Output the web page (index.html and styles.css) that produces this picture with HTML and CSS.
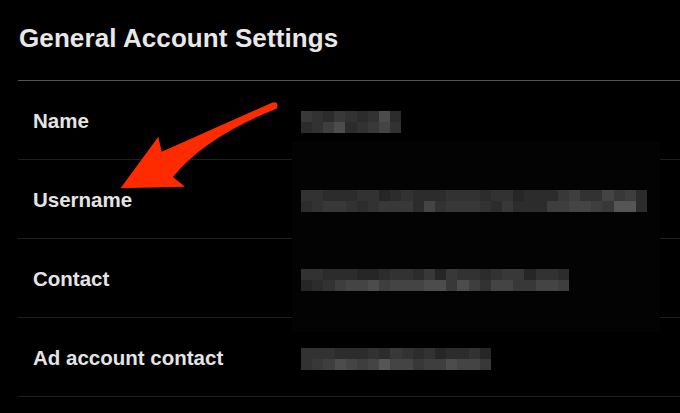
FILE: index.html
```html
<!DOCTYPE html>
<html lang="en">
<head>
<meta charset="utf-8">
<title>General Account Settings</title>
<link rel="stylesheet" href="styles.css">
</head>
<body>
<div class="page">
  <header class="header">
    <h1 class="title">General Account Settings</h1>
  </header>
  <div class="list">
    <div class="row">
      <div class="label">Name</div>
      <div class="pix w9">
        <i class="d"></i><i class="c"></i><i class="b"></i><i class="d"></i><i class="c"></i><i class="b"></i><i class="c"></i><i class="g"></i><i class="b"></i>
        <i class="b"></i><i class="c"></i><i class="e"></i><i class="g"></i><i class="b"></i><i class="c"></i><i class="d"></i><i class="f"></i><i class="c"></i>
      </div>
    </div>
    <div class="row">
      <div class="label">Username</div>
      <div class="pix w31">
        <i class="c"></i><i class="c"></i><i class="b"></i><i class="b"></i><i class="b"></i><i class="c"></i><i class="c"></i><i class="a"></i><i class="b"></i><i class="c"></i><i class="b"></i><i class="b"></i><i class="b"></i><i class="c"></i><i class="c"></i><i class="c"></i><i class="b"></i><i class="c"></i><i class="c"></i><i class="a"></i><i class="b"></i><i class="b"></i><i class="b"></i><i class="d"></i><i class="e"></i><i class="c"></i><i class="c"></i><i class="f"></i><i class="d"></i><i class="e"></i><i class="b"></i>
        <i class="b"></i><i class="c"></i><i class="d"></i><i class="d"></i><i class="c"></i><i class="b"></i><i class="c"></i><i class="d"></i><i class="d"></i><i class="d"></i><i class="b"></i><i class="f"></i><i class="c"></i><i class="d"></i><i class="d"></i><i class="d"></i><i class="c"></i><i class="b"></i><i class="d"></i><i class="b"></i><i class="b"></i><i class="b"></i><i class="e"></i><i class="e"></i><i class="f"></i><i class="f"></i><i class="e"></i><i class="d"></i><i class="h"></i><i class="h"></i><i class="b"></i>
      </div>
    </div>
    <div class="row">
      <div class="label">Contact</div>
      <div class="pix w24">
        <i class="c"></i><i class="c"></i><i class="b"></i><i class="b"></i><i class="b"></i><i class="a"></i><i class="a"></i><i class="b"></i><i class="c"></i><i class="c"></i><i class="b"></i><i class="d"></i><i class="a"></i><i class="d"></i><i class="c"></i><i class="c"></i><i class="b"></i><i class="c"></i><i class="d"></i><i class="d"></i><i class="a"></i><i class="c"></i><i class="c"></i><i class="b"></i>
        <i class="a"></i><i class="b"></i><i class="c"></i><i class="e"></i><i class="f"></i><i class="f"></i><i class="g"></i><i class="e"></i><i class="f"></i><i class="f"></i><i class="f"></i><i class="g"></i><i class="g"></i><i class="d"></i><i class="g"></i><i class="e"></i><i class="c"></i><i class="f"></i><i class="f"></i><i class="d"></i><i class="d"></i><i class="f"></i><i class="f"></i><i class="e"></i>
      </div>
    </div>
    <div class="row">
      <div class="label">Ad account contact</div>
      <div class="pix w17">
        <i class="c"></i><i class="c"></i><i class="c"></i><i class="b"></i><i class="b"></i><i class="b"></i><i class="c"></i><i class="b"></i><i class="d"></i><i class="c"></i><i class="b"></i><i class="c"></i><i class="a"></i><i class="b"></i><i class="b"></i><i class="c"></i><i class="a"></i>
        <i class="c"></i><i class="d"></i><i class="e"></i><i class="g"></i><i class="f"></i><i class="e"></i><i class="f"></i><i class="h"></i><i class="f"></i><i class="f"></i><i class="d"></i><i class="e"></i><i class="e"></i><i class="g"></i><i class="f"></i><i class="f"></i><i class="d"></i>
      </div>
    </div>
  </div>
  <div class="halo"></div>
  <svg class="arrow" width="680" height="413" viewBox="0 0 680 413" aria-hidden="true">
    <path d="M120.5 188.3 L158.3 136.7 L161.7 151.7 L272.5 102.5 Q279 101 277 108.5 Q205 137 173 177 L185 186.8 Z" fill="#fe2a00"/>
  </svg>
</div>
</body>
</html>
```

FILE: styles.css
```css
* { box-sizing: border-box; }

html, body {
  margin: 0;
  padding: 0;
  background: #000;
}

body {
  width: 680px;
  height: 413px;
  overflow: hidden;
  font-family: "Liberation Sans", Arial, sans-serif;
}

.page {
  position: relative;
  width: 680px;
  height: 413px;
}

.header {
  padding: 23px 0 27px 19px;
}

.title {
  margin: 0;
  font-size: 26px;
  line-height: 30px;
  font-weight: 700;
  color: #e8e8e8;
  letter-spacing: 0.1px;
}

.list {
  margin-left: 18px;
  border-top: 1px solid #545454;
}

.row {
  display: grid;
  grid-template-columns: 283px 1fr;
  align-items: center;
  height: 79px;
  padding-top: 2px;
  border-bottom: 1px solid #1f1f1f;
}

.label {
  padding-left: 15px;
  font-size: 20.5px;
  line-height: 24px;
  font-weight: 700;
  color: #e4e4e4;
}

.pix {
  position: relative;
  z-index: 1;
  display: grid;
  grid-template-rows: 11px 11px;
  margin-top: 2px;
}

.pix i { display: block; }

.w9  { width: 100px; grid-template-columns: repeat(9, 1fr); }
.w31 { width: 346px; grid-template-columns: repeat(31, 1fr); }
.w24 { width: 268px; grid-template-columns: repeat(24, 1fr); }
.w17 { width: 190px; grid-template-columns: repeat(17, 1fr); }

.pix .a { background: #262626; }
.pix .b { background: #2c2c2c; }
.pix .c { background: #323232; }
.pix .d { background: #383838; }
.pix .e { background: #3e3e3e; }
.pix .f { background: #444444; }
.pix .g { background: #4c4c4c; }
.pix .h { background: #555555; }

.halo {
  position: absolute;
  left: 292px;
  top: 142px;
  width: 368px;
  height: 190px;
  background: #030303;
}

.arrow {
  position: absolute;
  left: 0;
  top: 0;
  z-index: 2;
}
```
